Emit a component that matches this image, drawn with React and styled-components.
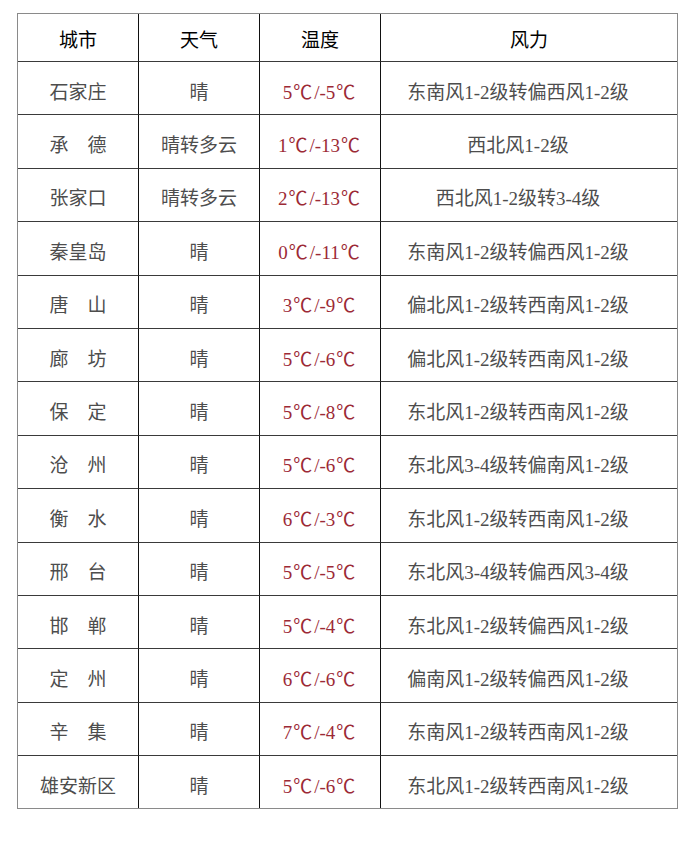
import React from 'react'
import styled, { createGlobalStyle } from 'styled-components'

const GlobalStyle = createGlobalStyle`
    body {
        margin: 0;
        background: #ffffff;
        font-family: 'Liberation Serif', 'Noto Sans CJK SC', serif;
    }
`

const Page = styled.div`
    width: 690px;
    height: 841px;
    padding: 13px 0 0 17px;
    box-sizing: border-box;
`

const Table = styled.table`
    border-spacing: 0;
    border: 1px solid #8a8a8a;
    table-layout: fixed;
    width: 661px;

    tbody td {
        border-top: 1px solid #3a3a3a;
    }

    td + td, th + th {
        border-left: 1px solid #111;
    }
`

const HeadCell = styled.th`
    height: 47px;
    padding: 2px 0 0;
    text-align: center;
    font-weight: 400;
    font-size: 19px;
    color: #000;
    box-sizing: border-box;
`

const Cell = styled.td`
    height: 53.4px;
    padding: ${p => (p.$wind ? '4px 22px 0 0' : '4px 0 0')};
    box-sizing: border-box;
    text-align: center;
    font-size: 19px;
    color: ${p => (p.$temp ? '#9c2a36' : '#4d4d4d')};
    white-space: nowrap;
`

const Degree = styled.span`
    display: inline-block;
    width: 22px;
    padding-left: 1px;
    box-sizing: border-box;
    text-align: left;
`

const rows = [
    ['石家庄', '晴', '5℃/-5℃', '东南风1-2级转偏西风1-2级'],
    ['承　德', '晴转多云', '1℃/-13℃', '西北风1-2级'],
    ['张家口', '晴转多云', '2℃/-13℃', '西北风1-2级转3-4级'],
    ['秦皇岛', '晴', '0℃/-11℃', '东南风1-2级转偏西风1-2级'],
    ['唐　山', '晴', '3℃/-9℃', '偏北风1-2级转西南风1-2级'],
    ['廊　坊', '晴', '5℃/-6℃', '偏北风1-2级转西南风1-2级'],
    ['保　定', '晴', '5℃/-8℃', '东北风1-2级转西南风1-2级'],
    ['沧　州', '晴', '5℃/-6℃', '东北风3-4级转偏南风1-2级'],
    ['衡　水', '晴', '6℃/-3℃', '东北风1-2级转西南风1-2级'],
    ['邢　台', '晴', '5℃/-5℃', '东北风3-4级转偏西风3-4级'],
    ['邯　郸', '晴', '5℃/-4℃', '东北风1-2级转偏西风1-2级'],
    ['定　州', '晴', '6℃/-6℃', '偏南风1-2级转偏西风1-2级'],
    ['辛　集', '晴', '7℃/-4℃', '东南风1-2级转西南风1-2级'],
    ['雄安新区', '晴', '5℃/-6℃', '东北风1-2级转西南风1-2级'],
]

// split "5℃/-5℃" so the degree sign gets a full-width box
const renderTemp = (temp) =>
    temp.split('℃').map((part, i, arr) => (
        <React.Fragment key={i}>
            {part}
            {i < arr.length - 1 && <Degree>℃</Degree>}
        </React.Fragment>
    ))

export default function App() {
    return (
        <Page>
            <GlobalStyle />
            <Table>
                <colgroup>
                    <col style={{ width: 120 }} />
                    <col style={{ width: 121 }} />
                    <col style={{ width: 121 }} />
                    <col />
                </colgroup>
                <thead>
                    <tr>
                        <HeadCell>城市</HeadCell>
                        <HeadCell>天气</HeadCell>
                        <HeadCell>温度</HeadCell>
                        <HeadCell>风力</HeadCell>
                    </tr>
                </thead>
                <tbody>
                    {rows.map(([city, weather, temp, wind]) => (
                        <tr key={city}>
                            <Cell>{city}</Cell>
                            <Cell>{weather}</Cell>
                            <Cell $temp>{renderTemp(temp)}</Cell>
                            <Cell $wind>{wind}</Cell>
                        </tr>
                    ))}
                </tbody>
            </Table>
        </Page>
    )
}
